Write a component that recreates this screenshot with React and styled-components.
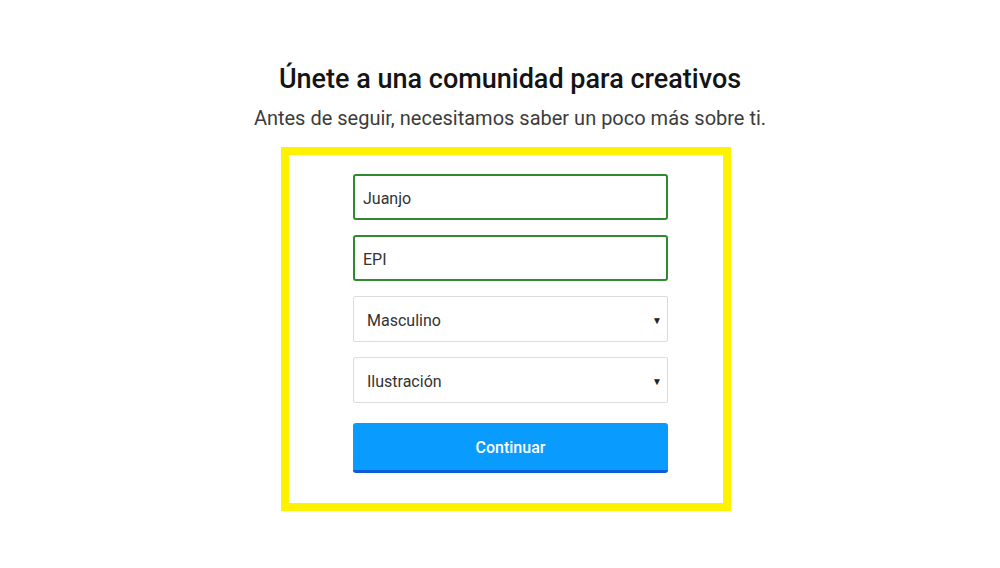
import React from "react";
import styled, { createGlobalStyle } from "styled-components";

const Global = createGlobalStyle`
  html, body { margin: 0; padding: 0; background: #fff; }
  body { font-family: Roboto, "Liberation Sans", sans-serif; }
`;

const Page = styled.div`
  width: 1000px;
  height: 568px;
  display: flex;
  flex-direction: column;
  align-items: center;
  padding: 60px 0 0 20px;
  box-sizing: border-box;
`;

const Title = styled.h1`
  margin: 0;
  font-size: 27px;
  font-weight: 500;
  color: #141414;
  line-height: 38px;
`;

const Subtitle = styled.p`
  margin: 7px 0 0;
  font-size: 20px;
  font-weight: 400;
  color: #3c3c3c;
  line-height: 26px;
`;

const Frame = styled.div`
  margin: 16px 8px 0 0;
  width: 450px;
  height: 364px;
  box-sizing: border-box;
  border: 8px solid #fff200;
  display: flex;
  justify-content: flex-start;
  padding: 19px 0 0 64px;
`;

const Form = styled.form`
  width: 315px;
  display: flex;
  flex-direction: column;
  gap: 15px;
`;

const TextField = styled.div`
  height: 46px;
  box-sizing: border-box;
  border: 2px solid #2f8a2f;
  border-radius: 3px;
  display: flex;
  align-items: center;
  padding: 2px 8px 0;
  font-size: 16px;
  color: #333;
`;

const Select = styled.div`
  height: 46px;
  box-sizing: border-box;
  border: 1px solid #dcdcdc;
  border-radius: 2px;
  display: flex;
  align-items: center;
  justify-content: space-between;
  padding: 2px 5px 0 13px;
  font-size: 16px;
  color: #333;
`;

const Caret = styled.span`
  font-size: 10px;
  color: #222;
`;

const Button = styled.button`
  margin-top: 5px;
  height: 50px;
  border: none;
  border-bottom: 3px solid #0a5fd8;
  border-radius: 3px;
  background: #0a9bff;
  color: #fff;
  font-family: inherit;
  font-size: 16px;
  font-weight: 500;
  padding: 2px 0 0;
`;

export default function App() {
  return (
    <>
      <Global />
      <Page>
        <Title>Únete a una comunidad para creativos</Title>
        <Subtitle>Antes de seguir, necesitamos saber un poco más sobre ti.</Subtitle>
        <Frame>
          <Form>
            <TextField>Juanjo</TextField>
            <TextField>EPI</TextField>
            <Select>Masculino<Caret>▼</Caret></Select>
            <Select>Ilustración<Caret>▼</Caret></Select>
            <Button type="button">Continuar</Button>
          </Form>
        </Frame>
      </Page>
    </>
  );
}
